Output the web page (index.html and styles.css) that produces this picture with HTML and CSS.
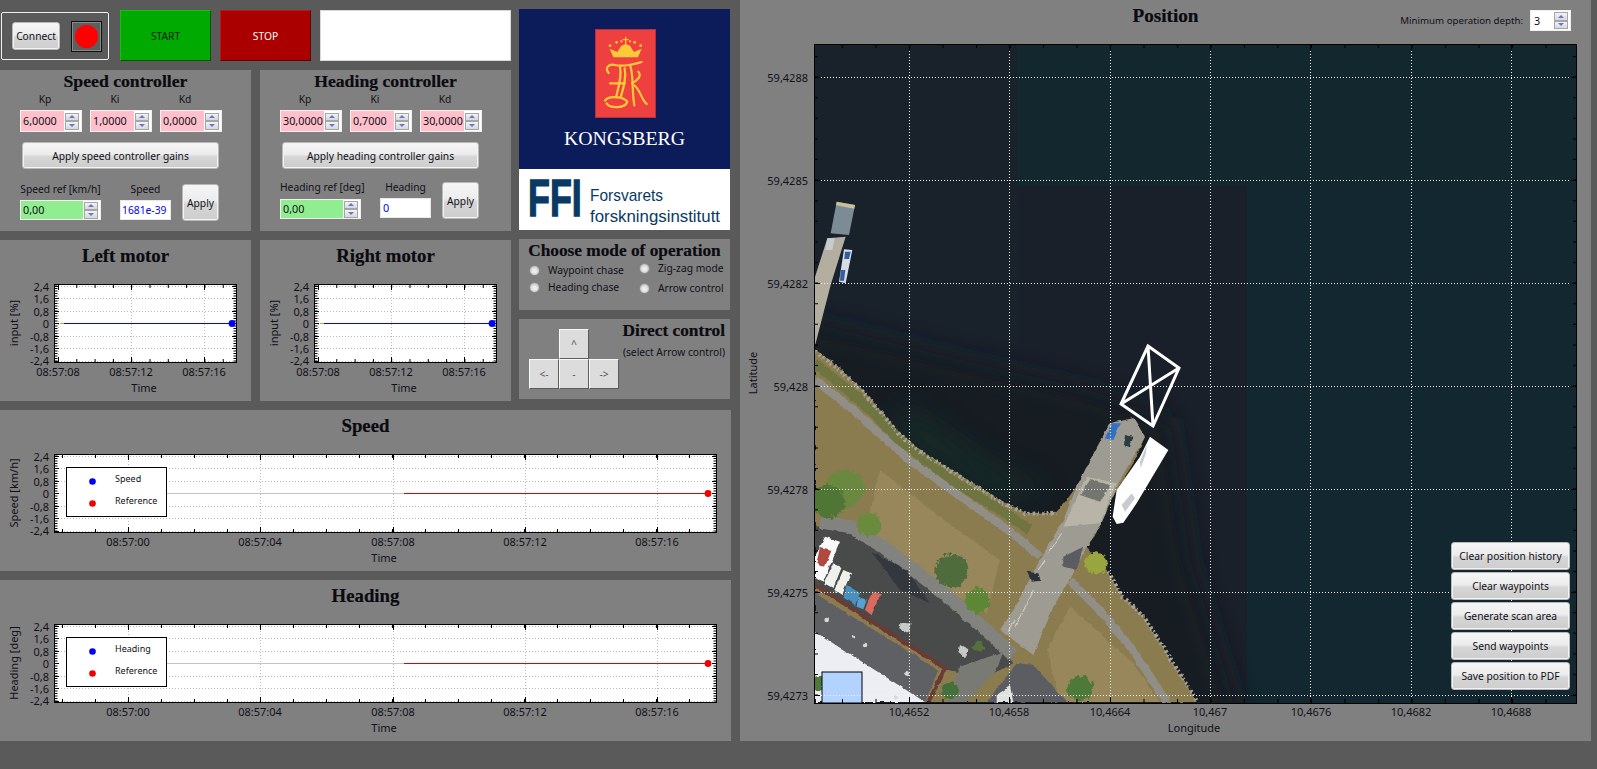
FILE: index.html
```html
<!DOCTYPE html>
<html lang="en">
<head>
<meta charset="utf-8">
<title>Control station</title>
<link rel="stylesheet" href="styles.css">
</head>
<body>
<svg class="defs" aria-hidden="true">
  <defs>
    <g id="small-frame">
      <rect x="54.5" y="284.5" width="182" height="78" fill="#fff"/>
      <path class="grid" d="M58.5 285V362M131.5 285V362M204.5 285V362M55 286.5H236M55 298.5H236M55 311.5H236M55 336.5H236M55 348.5H236M55 361.5H236"/>
      <line class="dash-x" x1="58" y1="360.5" x2="236" y2="360.5"/>
      <line class="dash-x" x1="58" y1="286.5" x2="236" y2="286.5"/>
      <line class="dash-y" x1="56" y1="285.5" x2="56" y2="362"/>
      <line class="dash-y" x1="235" y1="285.5" x2="235" y2="362"/>
      <path class="major" d="M58.5 284V290M131.5 284V290M204.5 284V290M58.5 362V357M131.5 362V357M204.5 362V357M54 286.5H59M54 298.5H59M54 311.5H59M54 323.5H59M54 336.5H59M54 348.5H59M54 361.5H59M232 286.5H236M232 298.5H236M232 311.5H236M232 323.5H236M232 336.5H236M232 348.5H236"/>
      <line x1="60" y1="323.5" x2="64" y2="323.5" stroke="#e0a030"/>
      <line x1="64" y1="323.5" x2="232" y2="323.5" stroke="#0000ff"/>
      <circle cx="232" cy="323.5" r="3.4" fill="#0000ff"/>
      <rect class="frame" x="54.5" y="284.5" width="182" height="78"/>
    </g>
    <g id="large-frame">
      <rect x="54.5" y="454.5" width="662" height="78" fill="#fff"/>
      <path class="grid" d="M128.5 455V532M260.5 455V532M393.5 455V532M525.5 455V532M657.5 455V532M55 456.5H716M55 468.5H716M55 481.5H716M55 506.5H716M55 518.5H716M55 531.5H716"/>
      <line class="dash-xl" x1="62" y1="530.5" x2="716" y2="530.5"/>
      <line class="dash-xl" x1="62" y1="456.5" x2="716" y2="456.5"/>
      <line class="dash-y" x1="56" y1="455.5" x2="56" y2="532"/>
      <line class="dash-y" x1="715" y1="455.5" x2="715" y2="532"/>
      <path class="major" d="M128.5 454V460M260.5 454V460M393.5 454V460M525.5 454V460M657.5 454V460M128.5 532V527M260.5 532V527M393.5 532V527M525.5 532V527M657.5 532V527M54 456.5H59M54 468.5H59M54 481.5H59M54 493.5H59M54 506.5H59M54 518.5H59M54 531.5H59M712 456.5H716M712 468.5H716M712 481.5H716M712 493.5H716M712 506.5H716M712 518.5H716"/>
      <line x1="166" y1="493.5" x2="404" y2="493.5" stroke="#c4c4c4"/>
      <line x1="404" y1="493.5" x2="708" y2="493.5" stroke="#e00000"/>
      <circle cx="708" cy="493.5" r="3.4" fill="#f00000"/>
      <rect class="frame" x="54.5" y="454.5" width="662" height="78"/>
      <rect x="66.5" y="467.5" width="100" height="49" fill="#fff" stroke="#000"/>
      <circle cx="92.5" cy="481.5" r="3.3" fill="#0000ff"/>
      <circle cx="92.5" cy="503.5" r="3.3" fill="#f00000"/>
    </g>
  </defs>
</svg>

<main class="app">
  <div class="left">
    <div class="upper">
      <div class="upper-left">
        <div class="top-row">
          <div class="connect-box">
            <button class="btn connect">Connect</button>
            <div class="led"><span class="led-dot"></span></div>
          </div>
          <button class="big start">START</button>
          <button class="big stop">STOP</button>
          <div class="message"></div>
        </div>

        <div class="panel-row">
          <section class="panel ctrl">
            <h2 class="title">Speed controller</h2>
            <div class="gains">
              <div class="gain"><label class="cap">Kp</label><div class="spin pink"><span class="val">6,0000</span><span class="arrows"><i class="up"></i><i class="dn"></i></span></div></div>
              <div class="gain"><label class="cap">Ki</label><div class="spin pink"><span class="val">1,0000</span><span class="arrows"><i class="up"></i><i class="dn"></i></span></div></div>
              <div class="gain"><label class="cap">Kd</label><div class="spin pink"><span class="val">0,0000</span><span class="arrows"><i class="up"></i><i class="dn"></i></span></div></div>
            </div>
            <button class="btn wide">Apply speed controller gains</button>
            <div class="refs">
              <div class="ref"><label class="ref-cap">Speed ref [km/h]</label><div class="spin green short"><span class="val">0,00</span><span class="arrows"><i class="up"></i><i class="dn"></i></span></div></div>
              <div class="meas"><label class="ref-cap">Speed</label><div class="readout small">1681e-39</div></div>
              <button class="btn apply">Apply</button>
            </div>
          </section>
          <section class="panel ctrl">
            <h2 class="title">Heading controller</h2>
            <div class="gains">
              <div class="gain"><label class="cap">Kp</label><div class="spin pink"><span class="val">30,0000</span><span class="arrows"><i class="up"></i><i class="dn"></i></span></div></div>
              <div class="gain"><label class="cap">Ki</label><div class="spin pink"><span class="val">0,7000</span><span class="arrows"><i class="up"></i><i class="dn"></i></span></div></div>
              <div class="gain"><label class="cap">Kd</label><div class="spin pink"><span class="val">30,0000</span><span class="arrows"><i class="up"></i><i class="dn"></i></span></div></div>
            </div>
            <button class="btn wide">Apply heading controller gains</button>
            <div class="refs up2">
              <div class="ref"><label class="ref-cap">Heading ref [deg]</label><div class="spin green short"><span class="val">0,00</span><span class="arrows"><i class="up"></i><i class="dn"></i></span></div></div>
              <div class="meas"><label class="ref-cap">Heading</label><div class="readout">0</div></div>
              <button class="btn apply">Apply</button>
            </div>
          </section>
        </div>

        <div class="panel-row">
          <section class="panel">
            <h2 class="title tall">Left motor</h2>
            <svg class="plot" viewBox="0 270 251 131">
              <use href="#small-frame"/>
              <g class="ylab"><text x="49" y="291">2,4</text><text x="49" y="303">1,6</text><text x="49" y="316">0,8</text><text x="49" y="328">0</text><text x="49" y="341">-0,8</text><text x="49" y="353">-1,6</text><text x="49" y="365">-2,4</text></g>
              <g class="xlab"><text x="58" y="376">08:57:08</text><text x="131" y="376">08:57:12</text><text x="204" y="376">08:57:16</text><text x="144" y="392">Time</text></g>
              <text class="ytitle" transform="translate(18 323) rotate(-90)">input [%]</text>
            </svg>
          </section>
          <section class="panel">
            <h2 class="title tall">Right motor</h2>
            <svg class="plot" viewBox="0 270 251 131">
              <use href="#small-frame"/>
              <g class="ylab"><text x="49" y="291">2,4</text><text x="49" y="303">1,6</text><text x="49" y="316">0,8</text><text x="49" y="328">0</text><text x="49" y="341">-0,8</text><text x="49" y="353">-1,6</text><text x="49" y="365">-2,4</text></g>
              <g class="xlab"><text x="58" y="376">08:57:08</text><text x="131" y="376">08:57:12</text><text x="204" y="376">08:57:16</text><text x="144" y="392">Time</text></g>
              <text class="ytitle" transform="translate(18 323) rotate(-90)">input [%]</text>
            </svg>
          </section>
        </div>
      </div>

      <aside class="side">
        <svg class="logo" viewBox="0 0 211 221">
          <rect width="211" height="160" fill="#0c1c5a"/>
          <rect y="160" width="211" height="61" fill="#fff"/>
          <rect x="76.5" y="20.5" width="60" height="88" fill="#ef4040" stroke="#b0304a"/>
          <g transform="translate(-9 -9) scale(.3333)">
            <path class="gold-fill" d="M310 172L299 146L322 156L334 137L347 132L360 137L372 156L395 146L384 172Z"/>
            <g class="gold-fill"><circle cx="300" cy="137" r="4"/><circle cx="320" cy="127" r="4"/><circle cx="334" cy="124" r="3.5"/><circle cx="360" cy="124" r="3.5"/><circle cx="374" cy="127" r="4"/><circle cx="392" cy="137" r="4"/></g>
            <path class="gold-line thin" d="M347 112V132M340 119H354"/>
            <path class="gold-line" d="M296 219C284 205 295 190 315 195C335 200 365 195 395 186"/>
            <path class="gold-line" d="M330 200C336 230 326 260 318 292M300 250H345"/>
            <path class="gold-line" d="M344 205C350 235 340 265 332 292"/>
            <path class="gold-line" d="M360 195C371 220 365 270 373 316"/>
            <path class="gold-line" d="M366 250C385 240 396 226 385 215M373 256C392 270 394 300 410 312"/>
            <path class="gold-line" d="M285 302C295 285 340 290 352 305C346 326 300 326 290 310"/>
          </g>
          <text class="kongsberg" x="105.5" y="136" textLength="121" lengthAdjust="spacingAndGlyphs">KONGSBERG</text>
          <text class="ffi" transform="translate(9 206.5) scale(.69 1)">FFI</text>
          <text class="ffi-name" x="71" y="192" textLength="73" lengthAdjust="spacingAndGlyphs">Forsvarets</text>
          <text class="ffi-name" x="71" y="213" textLength="130" lengthAdjust="spacingAndGlyphs">forskningsinstitutt</text>
        </svg>

        <section class="panel mode">
          <h2 class="title compact">Choose mode of operation</h2>
          <div class="radios">
            <div class="radio-col">
              <div class="radio first"><span class="dot"></span>Waypoint chase</div>
              <div class="radio"><span class="dot"></span>Heading chase</div>
            </div>
            <div class="radio-col right">
              <div class="radio first"><span class="dot"></span>Zig-zag mode</div>
              <div class="radio"><span class="dot"></span>Arrow control</div>
            </div>
          </div>
        </section>

        <section class="panel direct">
          <div class="pad">
            <button class="key k-up">^</button>
            <button class="key k-left">&lt;-</button>
            <button class="key k-mid">-</button>
            <button class="key k-right">-&gt;</button>
          </div>
          <div class="direct-text">
            <h2 class="title compact end">Direct control</h2>
            <p class="hint">(select Arrow control)</p>
          </div>
        </section>
      </aside>
    </div>

    <section class="panel wide-panel">
      <h2 class="title tall">Speed</h2>
      <svg class="plot" viewBox="0 440 731 131">
        <use href="#large-frame"/>
        <g class="ylab"><text x="49" y="461">2,4</text><text x="49" y="473">1,6</text><text x="49" y="486">0,8</text><text x="49" y="498">0</text><text x="49" y="511">-0,8</text><text x="49" y="523">-1,6</text><text x="49" y="535">-2,4</text></g>
        <g class="xlab"><text x="128" y="546">08:57:00</text><text x="260" y="546">08:57:04</text><text x="393" y="546">08:57:08</text><text x="525" y="546">08:57:12</text><text x="657" y="546">08:57:16</text><text x="384" y="562">Time</text></g>
        <text class="ytitle" transform="translate(18 493) rotate(-90)">Speed [km/h]</text>
        <g class="legend"><text x="115" y="482">Speed</text><text x="115" y="504">Reference</text></g>
      </svg>
    </section>
    <section class="panel wide-panel">
      <h2 class="title tall">Heading</h2>
      <svg class="plot" viewBox="0 440 731 131">
        <use href="#large-frame"/>
        <g class="ylab"><text x="49" y="461">2,4</text><text x="49" y="473">1,6</text><text x="49" y="486">0,8</text><text x="49" y="498">0</text><text x="49" y="511">-0,8</text><text x="49" y="523">-1,6</text><text x="49" y="535">-2,4</text></g>
        <g class="xlab"><text x="128" y="546">08:57:00</text><text x="260" y="546">08:57:04</text><text x="393" y="546">08:57:08</text><text x="525" y="546">08:57:12</text><text x="657" y="546">08:57:16</text><text x="384" y="562">Time</text></g>
        <text class="ytitle" transform="translate(18 493) rotate(-90)">Heading [deg]</text>
        <g class="legend"><text x="115" y="482">Heading</text><text x="115" y="504">Reference</text></g>
      </svg>
    </section>
  </div>

  <section class="panel map-panel">
    <header class="map-head">
      <span></span>
      <h2 class="title map-title">Position</h2>
      <div class="depth">
        <span class="depth-label">Minimum operation depth:</span>
        <div class="spin depth-spin"><span class="val">3</span><span class="arrows"><i class="up"></i><i class="dn"></i></span></div>
      </div>
    </header>
    <svg class="map" viewBox="740 44 851 697">
      <defs>
        <clipPath id="plot-clip"><rect x="815" y="45" width="761" height="658"/></clipPath>
        <filter id="shade" x="-20%" y="-20%" width="140%" height="140%"><feGaussianBlur stdDeviation="14"/></filter>
        <filter id="rough" x="-5%" y="-5%" width="110%" height="110%">
          <feTurbulence type="fractalNoise" baseFrequency=".05" numOctaves="3" seed="4" result="n"/>
          <feDisplacementMap in="SourceGraphic" in2="n" scale="10" xChannelSelector="R" yChannelSelector="G"/>
          <feGaussianBlur stdDeviation="2.2"/>
        </filter>
        <filter id="soft" x="-5%" y="-5%" width="110%" height="110%"><feGaussianBlur stdDeviation="1.6"/></filter>
        <filter id="leaf" x="-20%" y="-20%" width="140%" height="140%">
          <feTurbulence type="fractalNoise" baseFrequency=".08" numOctaves="3" seed="9" result="n"/>
          <feDisplacementMap in="SourceGraphic" in2="n" scale="24" xChannelSelector="R" yChannelSelector="G"/>
          <feGaussianBlur stdDeviation="2"/>
        </filter>
      </defs>
      <g clip-path="url(#plot-clip)">
        <rect x="814" y="44" width="763" height="659" fill="#19212b"/>
        <rect x="1017" y="44" width="560" height="142" fill="#13272f"/>
        <rect x="1247" y="186" width="330" height="517" fill="#12272f"/>
        <rect x="1017" y="186" width="230" height="517" fill="#1a202a"/>
        <path fill="#121a20" filter="url(#shade)" d="M800 320L960 360L1090 390L1170 420L1190 560L1240 720H800Z"/>
        <path fill="#14362a" opacity=".6" filter="url(#shade)" d="M900 400L1000 470L1050 490L1000 500L900 440Z"/>

        <g transform="translate(814 190) scale(.33333)" filter="url(#soft)">
          <path fill="#b4aea0" d="M40 145L95 140L50 285L5 460L0 470V270Z"/>
          <path fill="#7d8b96" d="M68 35L123 45L105 135L50 130Z"/>
          <path fill="#c8c09a" d="M68 35L123 45L121 56L66 46Z"/>
          <path fill="#c8ccd0" d="M40 145H62L55 180H34Z"/>
          <path fill="#d8dce8" d="M90 178L115 180L95 280L75 275Z"/>
          <path fill="#2f5f9f" d="M93 185H110L105 207H91ZM80 240H94L90 272H78Z"/>
        </g>

        <g transform="translate(800 330) scale(.33333)">
          <g filter="url(#rough)">
            <path fill="#8b7c50" d="M45 60L100 100L180 170L240 240L300 310L360 360L440 410L520 460L600 510L680 550L770 545L800 510L850 440L890 360L930 280L1000 265L1035 320L1000 400L950 480L920 540L890 610L860 650L920 720L960 790L1030 860L1100 970L1190 1116H45Z"/>
            <path fill="#98875a" d="M240 420L420 560L600 690L560 850L400 760L200 590ZM740 960L810 830L1000 1000L1080 1116H780Z"/>
            <path class="shore-green" d="M45 100L180 210L300 330L440 440L600 540L690 600"/>
            <path class="rocks" d="M45 65L100 105L180 175L240 245L300 315L360 365L440 415L520 465L600 515L680 552L770 548"/>
            <path class="rocks" d="M925 725L965 795L1035 865L1105 975L1190 1112"/>
            <path class="walk" d="M45 150L150 232L330 392L500 512L640 612L720 680"/>
            <path class="walk" d="M810 752L900 842L1000 962L1100 1116"/>
            <path fill="#4a4b4c" d="M45 590L140 580L250 650L420 790L530 880L610 960L640 1000L560 1040L440 1020L45 760Z"/>
            <path class="walk-wide" d="M60 575L150 590L250 650L420 780L530 875L640 975"/>
            <path fill="#33373c" d="M215 665L320 720L390 820L300 780Z"/>
            <path fill="#7a7a74" d="M480 1010L610 965L590 1020L500 1116H440Z"/>
            <path fill="#5c5d62" d="M650 1000L700 1005L800 1116H560Z"/>
            <path fill="#e0e2e0" d="M590 1095L630 1068L640 1116H590Z"/>
            <path fill="#5e6064" d="M45 790L415 1020L375 1116H240L45 905Z"/>
            <path fill="#eceef4" d="M45 905L375 1116H45Z"/>
            <path class="roof-edge" d="M45 765L435 1015L385 1116"/>
            <path fill="#9e9c92" d="M930 280L1000 265L1035 320L960 450L900 590L860 650L820 730L760 830L700 975L600 900L640 840L720 690L790 570L830 470L870 390Z"/>
            <path fill="#b8b5a8" d="M860 440L950 460L900 580L790 590Z"/>
            <path fill="#73756f" d="M870 450L930 465L900 515L840 495Z"/>
            <path fill="#5a5c62" d="M790 680L850 650L830 720L790 710Z"/>
            <path fill="#2b3338" d="M680 725L715 730L722 752L695 755Z"/>
            <path fill="#3070c8" d="M935 280L962 280L940 330L915 325Z"/>
            <path fill="#2b3c40" d="M975 315L1000 320L990 352L972 345Z"/>
            <path class="zebra" d="M625 905L645 870M645 890L665 850M665 855L685 815M685 815L700 780M715 720L735 690M745 670L765 640M765 640L785 610"/>
            <path fill="#fbfbfb" d="M75 620L120 635L70 755L45 745V680Z"/>
            <path fill="#b04a40" d="M60 650L95 660L75 710L50 700Z"/>
            <path fill="#f0f0f0" d="M100 700L125 712L100 775L72 760Z"/>
            <path fill="#f0f0ea" d="M130 720L153 730L125 795L103 780Z"/>
            <path fill="#4a90c0" d="M140 765L180 790L165 825L130 800Z"/>
            <path fill="#58a0d0" d="M175 800L200 810L190 838L170 830Z"/>
            <path fill="#d86a60" d="M215 785L242 792L215 855L195 840Z"/>
            <path fill="#c8cac8" d="M300 880L335 880L325 910L298 895ZM480 945L510 960L495 985L475 965Z"/>
            <g fill="#d8d8d0"><circle cx="80" cy="870" r="7"/><circle cx="160" cy="920" r="6"/><circle cx="195" cy="945" r="7"/><circle cx="320" cy="1030" r="7"/><circle cx="288" cy="1100" r="7"/></g>
          </g>
          <g filter="url(#soft)">
            <path fill="#fff" d="M1050 320L1105 360L1010 520L970 578L950 582L938 560L950 480L1020 380Z"/>
            <path fill="#c8ccd0" d="M965 525L995 490L1005 505L975 545ZM1020 395L1040 345L1038 370L1022 415Z"/>
          </g>
          <g filter="url(#leaf)">
            <circle cx="135" cy="475" r="58" fill="#6a8840"/>
            <circle cx="85" cy="515" r="50" fill="#4f7636"/>
            <circle cx="208" cy="583" r="36" fill="#6a8a3c"/>
            <circle cx="455" cy="722" r="50" fill="#4f6c3e"/>
            <circle cx="532" cy="812" r="38" fill="#5d8636"/>
            <circle cx="890" cy="700" r="33" fill="#98a63e"/>
            <circle cx="450" cy="1082" r="26" fill="#45703a"/>
            <circle cx="840" cy="1075" r="38" fill="#4d7a38"/>
            <circle cx="535" cy="950" r="15" fill="#55703a"/>
            <circle cx="55" cy="1060" r="22" fill="#4d7a38"/>
          </g>
        </g>

        <path class="route" d="M1148 346L1179 368L1153 426L1121 404ZM1148 346L1153 426M1121 404L1179 368"/>
      </g>

      <rect x="822" y="672" width="40" height="31" fill="#b2d2ff" stroke="#000"/>
      <path class="map-grid" d="M909.5 45V703M1009.5 45V703M1110.5 45V703M1210.5 45V703M1310.5 45V703M1411.5 45V703M1511.5 45V703M815 77.5H1576M815 180.5H1576M815 283.5H1576M815 386.5H1576M815 489.5H1576M815 592.5H1576M815 695.5H1576"/>
      <line class="tick-x" x1="842" y1="701" x2="1577" y2="701"/>
      <line class="tick-x" x1="842" y1="46" x2="1577" y2="46"/>
      <line class="tick-y" x1="816" y1="56" x2="816" y2="703"/>
      <line class="tick-y" x1="1575" y1="56" x2="1575" y2="703"/>
      <path class="major" d="M909.5 44V50M1009.5 44V50M1110.5 44V50M1210.5 44V50M1310.5 44V50M1411.5 44V50M1511.5 44V50M909.5 703V697M1009.5 703V697M1110.5 703V697M1210.5 703V697M1310.5 703V697M1411.5 703V697M1511.5 703V697M814 77.5H820M814 180.5H820M814 283.5H820M814 386.5H820M814 489.5H820M814 592.5H820M814 695.5H820M1577 77.5H1571M1577 180.5H1571M1577 283.5H1571M1577 386.5H1571M1577 489.5H1571M1577 592.5H1571M1577 695.5H1571"/>
      <rect class="frame" x="814.5" y="44.5" width="762" height="659"/>
      <g class="ylab"><text x="808" y="82">59,4288</text><text x="808" y="185">59,4285</text><text x="808" y="288">59,4282</text><text x="808" y="391">59,428</text><text x="808" y="494">59,4278</text><text x="808" y="597">59,4275</text><text x="808" y="700">59,4273</text></g>
      <g class="xlab"><text x="909" y="716">10,4652</text><text x="1009" y="716">10,4658</text><text x="1110" y="716">10,4664</text><text x="1210" y="716">10,467</text><text x="1311" y="716">10,4676</text><text x="1411" y="716">10,4682</text><text x="1511" y="716">10,4688</text><text x="1194" y="732">Longitude</text></g>
      <text class="ytitle" transform="translate(757 373) rotate(-90)">Latitude</text>
    </svg>
    <div class="map-actions">
      <button class="btn act">Clear position history</button>
      <button class="btn act">Clear waypoints</button>
      <button class="btn act">Generate scan area</button>
      <button class="btn act">Send waypoints</button>
      <button class="btn act">Save position to PDF</button>
    </div>
  </section>
</main>
</body>
</html>
```

FILE: styles.css
```css
* { box-sizing: border-box; }
html, body { margin: 0; padding: 0; }
body {
  width: 1597px;
  height: 769px;
  overflow: hidden;
  background: #5a5a5a;
  color: #101018;
  font-family: "Noto Sans", "Liberation Sans", sans-serif;
  font-size: 10.25px;
}
button { font: inherit; color: inherit; padding: 0; cursor: default; }
.defs { position: absolute; width: 0; height: 0; }

.app { display: flex; gap: 9px; align-items: flex-start; }
.left { width: 731px; padding-top: 9px; display: flex; flex-direction: column; gap: 9px; }
.upper { display: flex; gap: 8px; height: 392px; }
.upper-left { width: 511px; display: flex; flex-direction: column; gap: 9px; }
.side { width: 211px; display: flex; flex-direction: column; gap: 9px; }

.panel { background: #808080; }
.panel-row { display: flex; gap: 9px; }
.panel-row .panel { width: 251px; height: 161px; }
.title {
  margin: 0;
  text-align: center;
  font-family: "Liberation Serif", serif;
  font-weight: bold;
  font-size: 17.7px;
  line-height: 23px;
  color: #0a0a10;
  -webkit-text-stroke: .2px #0a0a10;
}
.title.compact { font-size: 17.3px; }
.title.tall { height: 30px; line-height: 32px; font-size: 18.8px; }
.wide-panel { width: 731px; height: 161px; }
.plot { display: block; width: 100%; height: 131px; }

/* top row */
.top-row { display: flex; align-items: flex-start; height: 51px; margin-top: 1px; }
.connect-box {
  width: 108px;
  height: 48px;
  margin: 2px 11px 0 1px;
  border: 1px solid #f0f0f0;
  border-radius: 2px;
  background: #5a5a5a;
  display: flex;
  align-items: center;
  padding-left: 10px;
  gap: 11px;
}
.connect { width: 48px; height: 28px; }
.led {
  width: 31px;
  height: 31px;
  background: #5e5e5e;
  border: 1px solid #111;
  outline: 1px solid #8a8a8a;
  outline-offset: -2px;
  display: flex;
  align-items: center;
  justify-content: center;
}
.led-dot { width: 23px; height: 23px; border-radius: 50%; background: #ff0000; }
.big {
  width: 91px;
  height: 51px;
  border: 1px solid;
  border-radius: 0;
}
.start { background: #00aa00; color: #0c240c; border-color: #14c014 #0a500a #0a500a #14c014; margin-right: 9px; }
.stop { background: #aa0000; color: #fff; border-color: #c01818 #500a0a #500a0a #c01818; margin-right: 9px; }
.message { width: 191px; height: 51px; background: #fff; border: 1px solid #d8d8d8; }

/* shared widgets */
.btn {
  display: block;
  border: 1px solid #b8b8b8;
  border-radius: 3px;
  background: linear-gradient(#f6f6f6 0%, #ececec 45%, #d6d6d6 55%, #cdcdcd 100%);
  color: #101018;
  text-align: center;
  box-shadow: inset 0 0 0 1px #f4f4f4;
}
.spin {
  display: flex;
  width: 62px;
  height: 22px;
  background: #fff;
  border: 1px solid #f0f0f0;
  padding-right: 2px;
}
.val { flex: 1; min-width: 0; padding-left: 2px; font-size: 10.8px; line-height: 20px; white-space: nowrap; }
.pink .val { background: #ffc0cb; }
.green .val { background: #90ee90; }
.spin.short { width: 81px; height: 20px; }
.spin.short .val { line-height: 18px; }
.arrows { width: 14px; flex: none; display: flex; flex-direction: column; justify-content: center; margin-left: 1px; }
.arrows i {
  display: flex;
  align-items: center;
  justify-content: center;
  height: 8.5px;
  background: linear-gradient(#f2f2f6, #d6d8e0);
  border: 1px solid #a6a6a6;
}
.arrows i::before { content: ""; border-left: 3.5px solid transparent; border-right: 3.5px solid transparent; }
.arrows .up::before { border-bottom: 3.5px solid #6a78b8; }
.arrows .dn::before { border-top: 3.5px solid #6a78b8; }

/* controller panels */
.gains { display: flex; gap: 8px; padding-left: 20px; }
.gain { width: 62px; }
.cap { display: block; width: 50px; height: 17px; line-height: 12px; text-align: center; }
.wide { width: 197px; height: 27px; margin: 10px 0 0 22px; }
.refs { display: flex; margin: 14px 0 0 20px; align-items: flex-start; }
.ref { width: 81px; margin-right: 19px; }
.meas { width: 51px; margin-right: 11px; }
.ref-cap { display: block; height: 17px; line-height: 12px; text-align: center; white-space: nowrap; }
.readout {
  height: 20px;
  background: #fff;
  border: 1px solid #e8e8e8;
  color: #0000ff;
  font-size: 10.8px;
  line-height: 18px;
  padding-left: 2px;
  white-space: nowrap;
}
.readout.small { font-size: 10.3px; padding-left: 1px; }
.apply { width: 37px; height: 37px; margin-top: 1px; }
.up2 { margin-top: 12px; }
.up2 .ref-cap { height: 18px; }
.up2 .meas .ref-cap { height: 17px; }

/* logo */
.logo { display: block; width: 211px; height: 221px; flex: none; }
.gold-fill { fill: #ffca38; }
.gold-line { fill: none; stroke: #ffca38; stroke-width: 6.5; stroke-linecap: round; }
.gold-line.thin { stroke-width: 4; }
.kongsberg { font-family: "Liberation Serif", serif; font-size: 19.5px; fill: #fff; text-anchor: middle; }
.ffi { font-family: "Liberation Sans", sans-serif; font-weight: bold; font-size: 52px; fill: #0a3a64; stroke: #0a3a64; stroke-width: 1.4; }
.ffi-name { font-family: "Liberation Sans", sans-serif; font-size: 17px; fill: #0a3a64; }

/* mode */
.mode { height: 71px; }
.radios { display: flex; }
.radio-col { width: 110px; padding-left: 10px; }
.radio { display: flex; align-items: center; gap: 8px; height: 18px; white-space: nowrap; }
.radio.first { height: 16px; }
.radio-col.right { width: 101px; }
.radio-col.right .radio.first { margin-top: -2px; margin-bottom: 3px; }
.dot {
  width: 11px;
  height: 11px;
  flex: none;
  border-radius: 50%;
  border: 1px solid #8c8c8c;
  background: radial-gradient(circle at 50% 55%, #ececec 0 30%, #bcbcbc 75%, #a4a4a4 100%);
}

/* direct control */
.direct { height: 80px; display: flex; position: relative; padding: 10px 5px 0 10px; }
.pad {
  width: 91px;
  height: 60px;
  display: grid;
  grid-template-columns: repeat(3, 30px);
  grid-template-rows: repeat(2, 30px);
  flex: none;
}
.key {
  background: #dcdcdc;
  border: 1px solid;
  border-color: #f8f8f8 #5c5c5c #5c5c5c #f8f8f8;
  color: #555;
}
.k-up { grid-column: 2; grid-row: 1; }
.k-left { grid-column: 1; grid-row: 2; }
.k-mid { grid-column: 2; grid-row: 2; }
.k-right { grid-column: 3; grid-row: 2; }
.direct-text { flex: 1; text-align: right; margin-top: -10px; }
.title.end { text-align: right; white-space: nowrap; }
.hint { margin: 3px 0 0 -20px; white-space: nowrap; line-height: 14px; }

/* charts */
.grid { fill: none; stroke: #b8b8b8; stroke-dasharray: 1 2; }
.frame { fill: none; stroke: #000; }
.major { fill: none; stroke: #000; }
.dash-x { stroke: #000; stroke-width: 3; stroke-dasharray: 1 17.3; }
.dash-xl { stroke: #000; stroke-width: 3; stroke-dasharray: 1 32; }
.dash-y { stroke: #000; stroke-width: 3; stroke-dasharray: 1 1.5; }
.ylab text { text-anchor: end; }
.xlab text { text-anchor: middle; }
.plot text, .map text { font-family: "Noto Sans", "Liberation Sans", sans-serif; font-size: 11px; fill: #101018; }
.ytitle { text-anchor: middle; }
.plot .legend text { font-size: 9px; }

/* map */
.map-panel { width: 851px; height: 741px; position: relative; }
.map-head { display: grid; grid-template-columns: 1fr auto 1fr; height: 44px; }
.map-title.title { line-height: 32px; font-size: 19.2px; }
.depth { display: flex; justify-content: flex-end; gap: 7px; padding: 10px 20px 0 0; height: 44px; line-height: 22px; white-space: nowrap; }
.depth-label { font-size: 9.7px; }
.depth-spin { width: 41px; height: 21px; }
.depth-spin .val { line-height: 19px; padding-left: 3px; }
.map { display: block; width: 851px; height: 697px; }
.map-grid { fill: none; stroke: #f4f4f4; stroke-dasharray: 1 2; }
.tick-x { stroke: #000; stroke-width: 4; stroke-dasharray: 1 32.5; }
.tick-y { stroke: #000; stroke-width: 4; stroke-dasharray: 1 19.6; }
.route { fill: none; stroke: #fff; stroke-width: 3; stroke-linejoin: miter; }
.rocks { fill: none; stroke: #a5a296; stroke-width: 12; stroke-dasharray: 5 9 8 6; }
.shore-green { fill: none; stroke: #6e7440; stroke-width: 30; }
.walk { fill: none; stroke: #908e86; stroke-width: 24; }
.walk-wide { fill: none; stroke: #82827e; stroke-width: 40; }
.roof-edge { fill: none; stroke: #6a3a36; stroke-width: 12; }
.zebra { fill: none; stroke: #d4d2c6; stroke-width: 3; }
.map-actions {
  position: absolute;
  left: 711px;
  top: 542px;
  display: flex;
  flex-direction: column;
  gap: 2px;
}
.act { width: 119px; height: 28px; }
```
